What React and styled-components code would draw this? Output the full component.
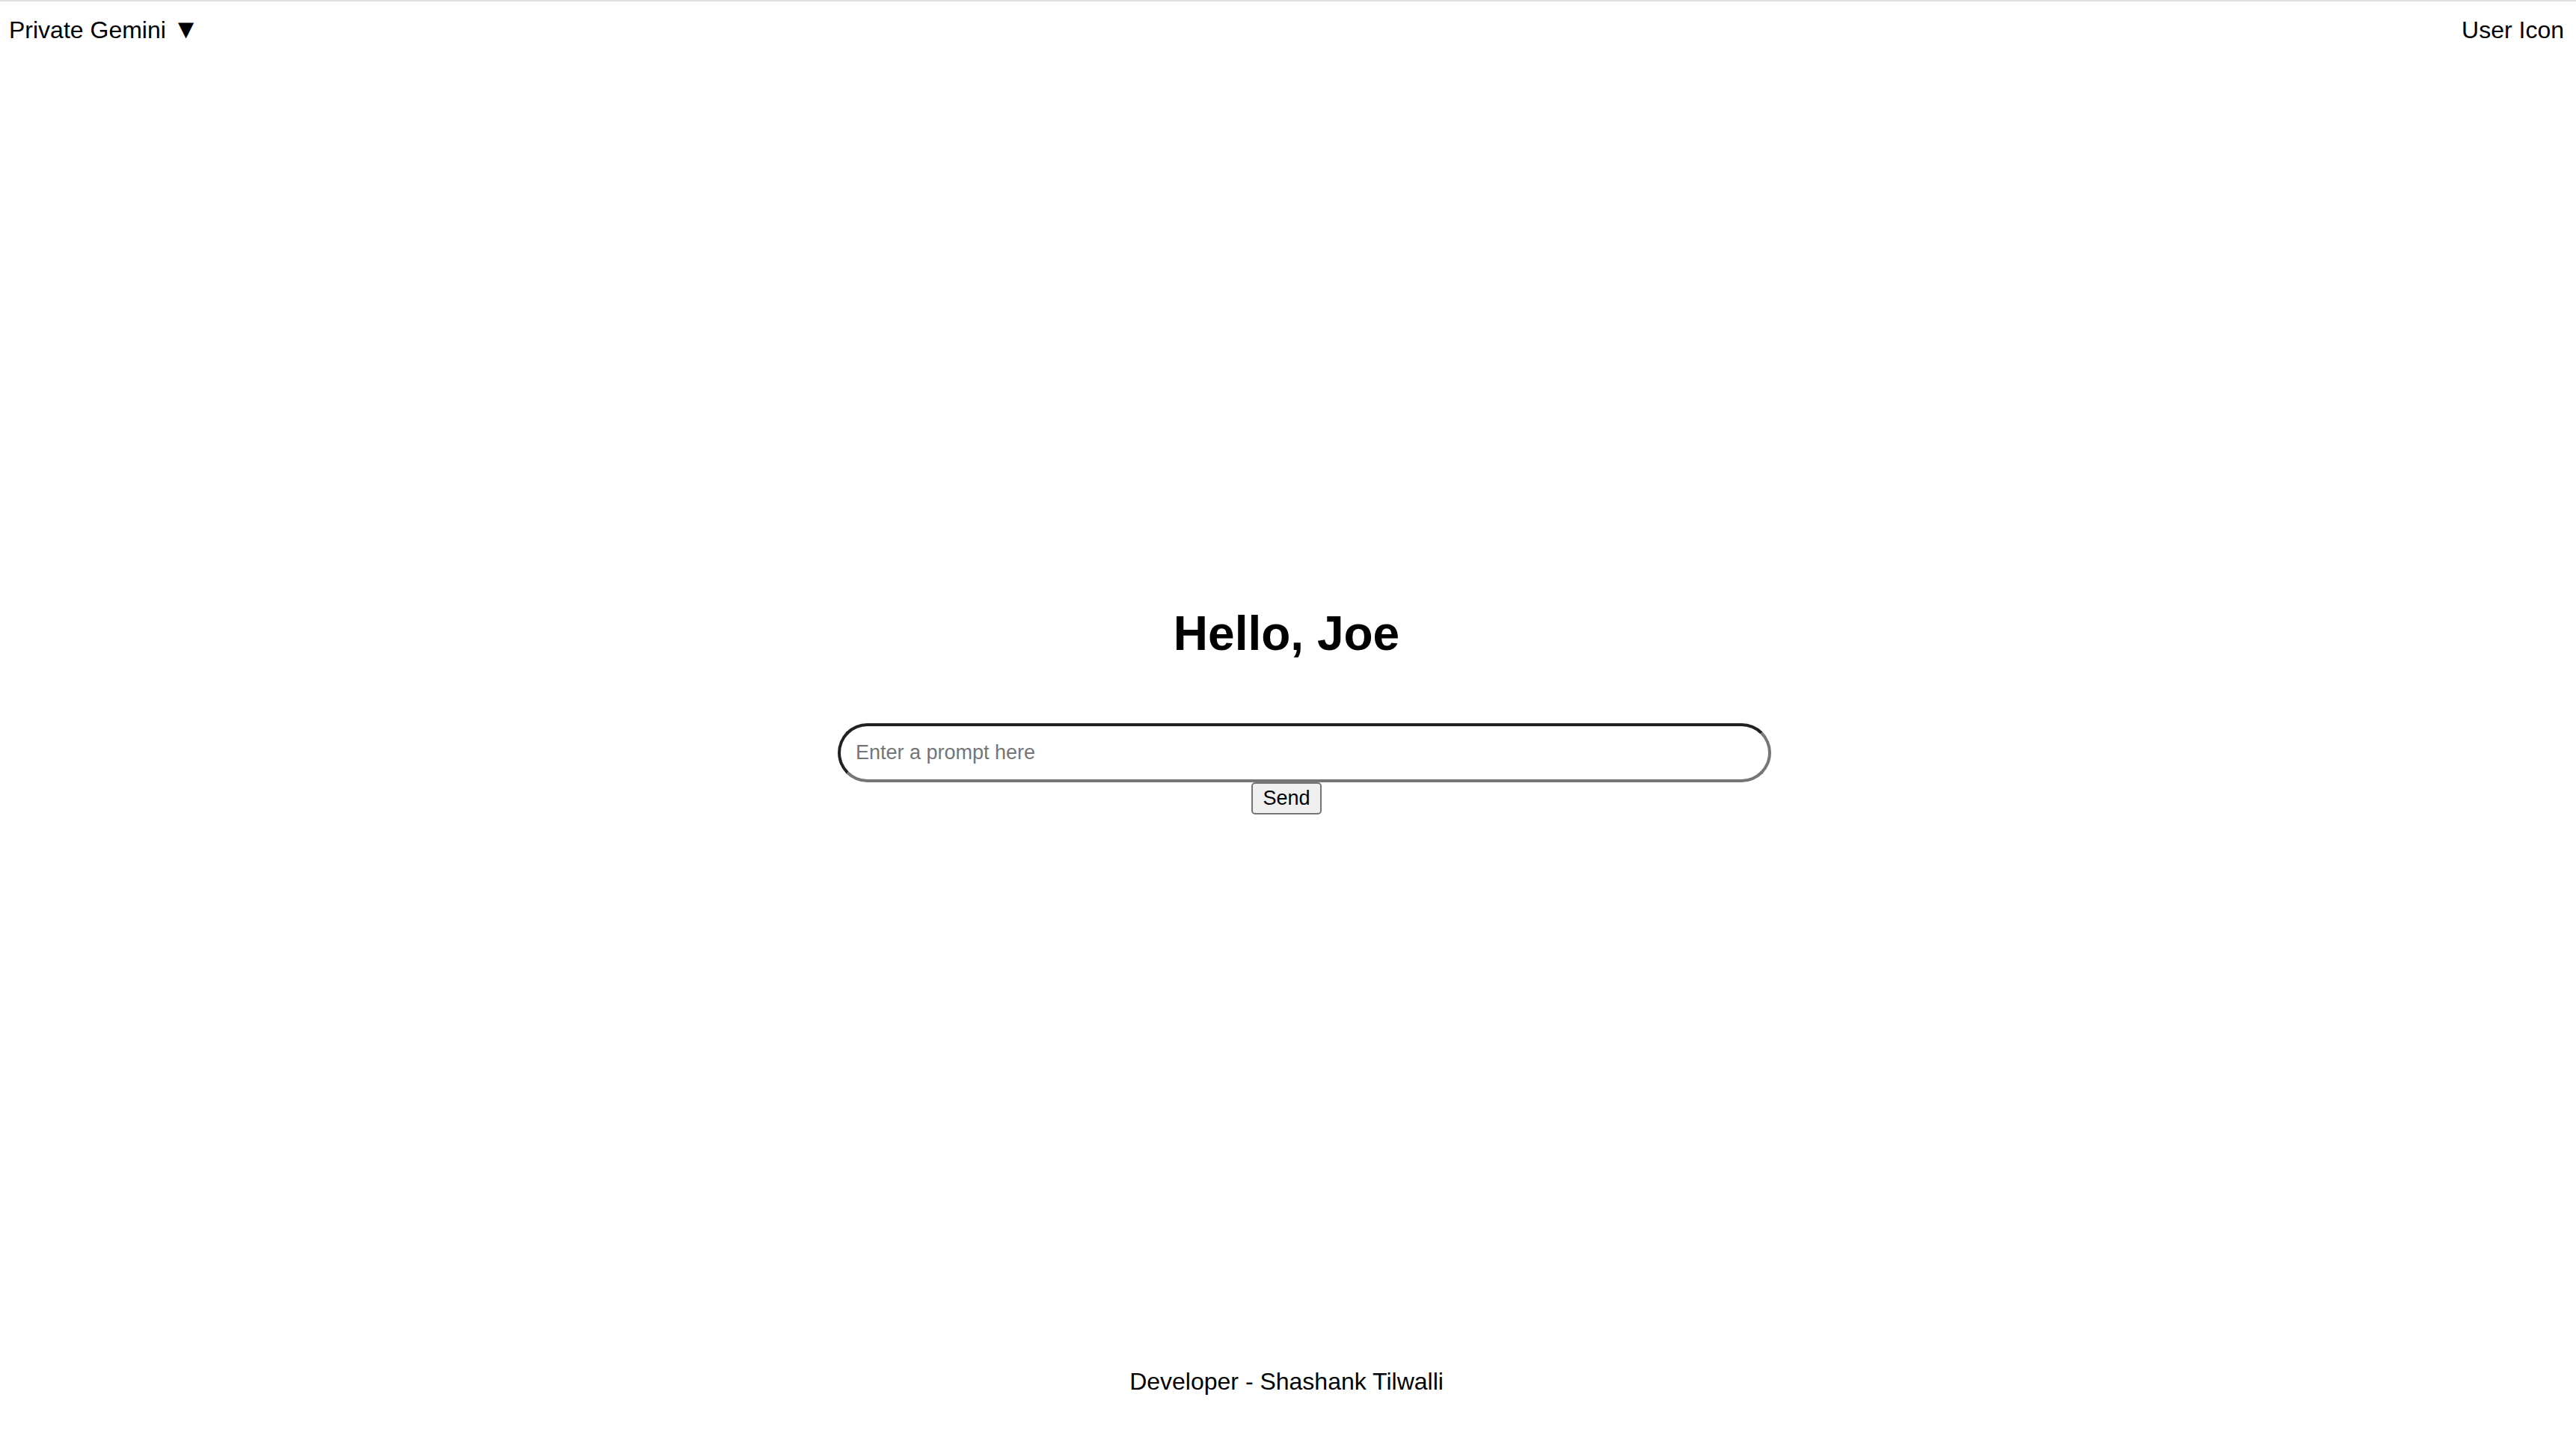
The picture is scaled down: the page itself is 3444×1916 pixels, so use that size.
import React, { useState } from "react";
import styled, { createGlobalStyle } from "styled-components";

const GlobalStyle = createGlobalStyle`
  body {
    margin: 0;
    background: #fff;
    color: #000;
    font-family: "Liberation Sans", Arial, sans-serif;
    font-size: 32px;
    line-height: 37px;
  }
`;

const Page = styled.div`
  display: flex;
  flex-direction: column;
  min-height: 100vh;
  box-sizing: border-box;
  padding-right: 4px;
  border-top: 2px solid #dee2e6;
`;

const Header = styled.header`
  display: flex;
  justify-content: space-between;
  padding: 20px 12px;
`;

const Arrow = styled.span`
  font-size: 36px;
  line-height: 32px;
`;

const Main = styled.main`
  flex: 1;
  display: flex;
  flex-direction: column;
  align-items: center;
  justify-content: center;
`;

const Greeting = styled.h1`
  margin: 43px 0;
  font-size: 64px;
  line-height: 74px;
`;

const PromptForm = styled.form`
  display: flex;
  flex-direction: column;
  align-items: center;
  width: 1200px;
  max-width: 100%;
  padding-top: 40px;
`;

const PromptInput = styled.input`
  align-self: flex-start;
  box-sizing: content-box;
  width: 100%;
  height: 31px;
  margin: 0;
  padding: 20px;
  border: 4px solid;
  border-color: #212121 #767676 #767676 #212121;
  border-radius: 40px;
  background: #fff;
  color: #000;
  font-family: inherit;
  font-size: 27px;
  outline: none;

  &::placeholder {
    color: #757575;
    opacity: 1;
  }
`;

const SendButton = styled.button`
  margin: 0;
  padding: 4px 13px;
  border: 2px solid #767676;
  border-radius: 5px;
  background: #efefef;
  color: #000;
  font-family: inherit;
  font-size: 27px;
  line-height: 31px;
`;

const Footer = styled.footer`
  padding: 53px 0 50px;
  text-align: center;
`;

export default function App() {
  const [prompt, setPrompt] = useState("");

  return (
    <>
      <GlobalStyle />
      <Page>
        <Header>
          <span>
            Private Gemini <Arrow>▼</Arrow>
          </span>
          <span>User Icon</span>
        </Header>
        <Main>
          <Greeting>Hello, Joe</Greeting>
          <PromptForm onSubmit={(event) => event.preventDefault()}>
            <PromptInput
              type="text"
              aria-label="Prompt"
              placeholder="Enter a prompt here"
              value={prompt}
              onChange={(event) => setPrompt(event.target.value)}
            />
            <SendButton type="submit">Send</SendButton>
          </PromptForm>
        </Main>
        <Footer>Developer - Shashank Tilwalli</Footer>
      </Page>
    </>
  );
}
